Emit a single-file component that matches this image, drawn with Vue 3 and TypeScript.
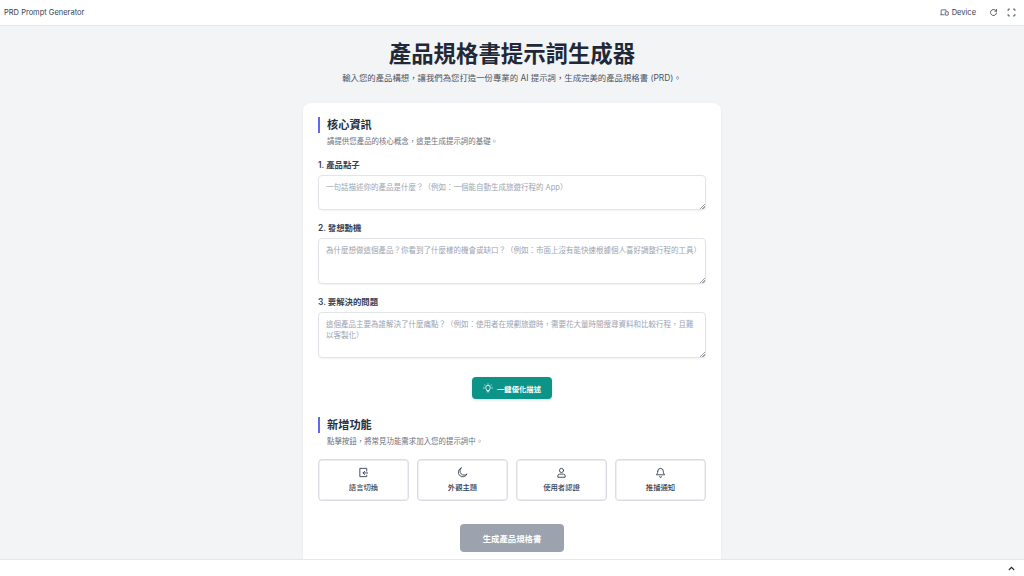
<script setup lang="ts">
interface Field { label: string; placeholder: string; rows: string }
interface Feature { name: string; icon: string }
const fields: Field[] = [
  { label: '1. 產品點子', placeholder: '一句話描述你的產品是什麼？（例如：一個能自動生成旅遊行程的 App）', rows: 'short' },
  { label: '2. 發想動機', placeholder: '為什麼想做這個產品？你看到了什麼樣的機會或缺口？（例如：市面上沒有能快速根據個人喜好調整行程的工具）', rows: 'tall' },
  { label: '3. 要解決的問題', placeholder: '這個產品主要為誰解決了什麼痛點？（例如：使用者在規劃旅遊時，需要花大量時間搜尋資料和比較行程，且難以客製化）', rows: 'tall' },
]
const features: Feature[] = [
  { name: '語言切換', icon: 'lang' },
  { name: '外觀主題', icon: 'moon' },
  { name: '使用者認證', icon: 'user' },
  { name: '推播通知', icon: 'bell' },
]
</script>

<template>
  <div class="app" lang="zh-TW">
    <header class="topbar">
      <span class="brand">PRD Prompt Generator</span>
      <div class="tools">
        <span class="device">
          <svg width="9" height="9" viewBox="0 0 24 24" fill="none" stroke="currentColor" stroke-width="2"><path d="M3 18V6a1 1 0 0 1 1-1h12v3" /><path d="M1 18h11" /><rect x="14" y="10" width="8" height="9" rx="1" /></svg>
          Device
        </span>
        <svg class="tool" width="9" height="9" viewBox="0 0 24 24" fill="none" stroke="currentColor" stroke-width="2.2"><path d="M20 12a8 8 0 1 1-2.5-5.8L20 8.5" /><path d="M20 3v5.5h-5.500" /></svg>
        <svg class="tool" width="9" height="9" viewBox="0 0 24 24" fill="none" stroke="currentColor" stroke-width="2.2"><path d="M3 8V3h5M16 3h5v5M21 16v5h-5M8 21H3v-5" /></svg>
      </div>
    </header>

    <main class="content">
      <h1>產品規格書提示詞生成器</h1>
      <p class="lead">輸入您的產品構想，讓我們為您打造一份專業的 AI 提示詞，生成完美的產品規格書 (PRD)。</p>

      <section class="card">
        <h2>核心資訊</h2>
        <p class="desc">請提供您產品的核心概念，這是生成提示詞的基礎。</p>

        <div v-for="f in fields" :key="f.label" class="field">
          <label>{{ f.label }}</label>
          <textarea :class="f.rows" :placeholder="f.placeholder"></textarea>
        </div>

        <div class="center">
          <button class="optimize" type="button">
            <svg width="10" height="10" viewBox="0 0 24 24" fill="none" stroke="currentColor" stroke-width="2" stroke-linecap="round"><path d="M12 2v1M4 5l1 1M20 5l-1 1M1.500 12h1.500M21 12h1.500" /><path d="M9 17c0-2-2.500-3-2.500-6a5.500 5.500 0 0 1 11 0c0 3-2.500 4-2.500 6z" /><path d="M10 21h4" /></svg>
            一鍵優化描述
          </button>
        </div>

        <h2 class="second">新增功能</h2>
        <p class="desc">點擊按鈕，將常見功能需求加入您的提示詞中。</p>

        <div class="features">
          <button v-for="item in features" :key="item.name" class="feature" type="button">
            <svg width="11" height="11" viewBox="0 0 24 24" fill="none" stroke="currentColor" stroke-width="2" stroke-linecap="round" stroke-linejoin="round">
              <template v-if="item.icon === 'lang'">
                <path d="M19 9V3H9L4 3v18h15v-3" /><path d="M21 13h-10M14.500 9.500 11 13l3.500 3.500" />
              </template>
              <path v-else-if="item.icon === 'moon'" d="M9 2a10 10 0 1 0 13 13 9 9 0 0 1-13-13z" />
              <template v-else-if="item.icon === 'user'">
                <circle cx="12" cy="7.500" r="4.500" /><path d="M4 21.500v-2a4 4 0 0 1 4-4h8a4 4 0 0 1 4 4v2z" />
              </template>
              <template v-else>
                <path d="M6 9a6 6 0 0 1 12 0c0 6 3 8 3 8H3s3-2 3-8" /><path d="M10 21a2 2 0 0 0 4 0" />
              </template>
            </svg>
            <span>{{ item.name }}</span>
          </button>
        </div>

        <div class="center">
          <button class="generate" type="button">生成產品規格書</button>
        </div>
      </section>
    </main>

    <footer class="bottombar">
      <svg width="9" height="9" viewBox="0 0 24 24" fill="none" stroke="#1f2937" stroke-width="3"><path d="M5 16l7-7 7 7" /></svg>
    </footer>
  </div>
</template>

<style>
html, body { margin: 0; padding: 0; }
</style>

<style scoped>
.app {
  width: 1024px;
  height: 576px;
  display: flex;
  flex-direction: column;
  overflow: hidden;
  background: #f3f4f6;
  font-family: Inter, "Noto Sans CJK TC", sans-serif;
  color: #1f2937;
}
.topbar {
  height: 25px;
  flex: none;
  display: flex;
  align-items: center;
  justify-content: space-between;
  padding: 0 8px 0 4px;
  background: #fff;
  border-bottom: 1px solid #e5e7eb;
}
.brand { font-size: 7.5px; color: #374151; }
.tools { display: flex; align-items: center; gap: 9px; color: #374151; }
.device { display: flex; align-items: center; gap: 3px; font-size: 7.5px; margin-right: 4px; }
.content {
  flex: 1;
  min-height: 0;
  overflow: hidden;
  display: flex;
  flex-direction: column;
  align-items: center;
  padding-top: 12px;
}
h1 { margin: 0; font-size: 22.4px; line-height: 32px; font-weight: 700; color: #1f2937; }
.lead { margin: 1px 0 0; font-size: 8.4px; line-height: 14px; color: #4b5563; }
.card {
  flex: none;
  box-sizing: border-box;
  width: 418px;
  margin-top: 18px;
  padding: 14px 15px;
  background: #fff;
  border-radius: 8px;
  box-shadow: 0 1px 3px rgba(0, 0, 0, .06);
}
h2 {
  margin: 0;
  padding-left: 7px;
  border-left: 2px solid #6366f1;
  font-size: 11.2px;
  line-height: 16px;
  font-weight: 700;
  color: #273142;
}
h2.second { margin-top: 18px; }
.desc { margin: 3px 0 0 9px; font-size: 7.45px; line-height: 12px; color: #6b7280; }
.field { margin-top: 12px; }
.field:first-of-type { margin-top: 11px; }
label { display: block; font-size: 8.4px; line-height: 12px; font-weight: 600; color: #374151; }
textarea {
  display: block;
  box-sizing: border-box;
  width: 100%;
  margin-top: 4px;
  padding: 6px 7px;
  border: 1px solid #e2e4e9;
  border-radius: 4px;
  font: 7.5px/11px Inter, "Noto Sans CJK TC", sans-serif;
  background: #fff;
  box-shadow: 0 1px 2px rgba(0, 0, 0, .05);
  resize: vertical;
}
textarea::placeholder { color: #9ca3af; opacity: 1; }
textarea::-webkit-resizer {
  background: linear-gradient(135deg, transparent 60%, #9ca3af 60%, #9ca3af 68%, transparent 68%, transparent 78%, #9ca3af 78%, #9ca3af 86%, transparent 86%) no-repeat right bottom / 7px 7px;
}
.short { height: 35px; }
.tall { height: 46px; }
.center { display: flex; justify-content: center; }
.field + .center { margin-top: 19px; }
.optimize {
  display: flex;
  align-items: center;
  gap: 4px;
  height: 22px;
  width: 80px;
  justify-content: center;
  border: 0;
  border-radius: 4px;
  background: #0d9488;
  color: #fff;
  font: 600 7.35px Inter, "Noto Sans CJK TC", sans-serif;
  box-shadow: 0 1px 3px rgba(0, 0, 0, .15);
  padding: 0;
}
.features { margin-top: 11px; display: grid; grid-template-columns: repeat(4, 1fr); gap: 8px; }
.feature {
  height: 42px;
  box-sizing: border-box;
  padding: 0;
  display: flex;
  flex-direction: column;
  align-items: center;
  justify-content: center;
  gap: 4px;
  background: #fff;
  border: 1px solid #d9dce3;
  box-shadow: inset 0 0 0 .4px #d9dce3;
  border-radius: 4px;
  color: #374151;
  font: 500 7.35px/12px Inter, "Noto Sans CJK TC", sans-serif;
}
.features + .center { margin-top: 23px; }
.generate {
  width: 104px;
  height: 28px;
  padding: 0;
  border: 0;
  border-radius: 4px;
  background: #9ca3af;
  color: #fff;
  font: 700 8.4px Inter, "Noto Sans CJK TC", sans-serif;
}
.bottombar {
  height: 16px;
  flex: none;
  display: flex;
  align-items: center;
  justify-content: flex-end;
  padding-right: 8px;
  background: #fff;
  border-top: 1px solid #e5e7eb;
}
</style>
